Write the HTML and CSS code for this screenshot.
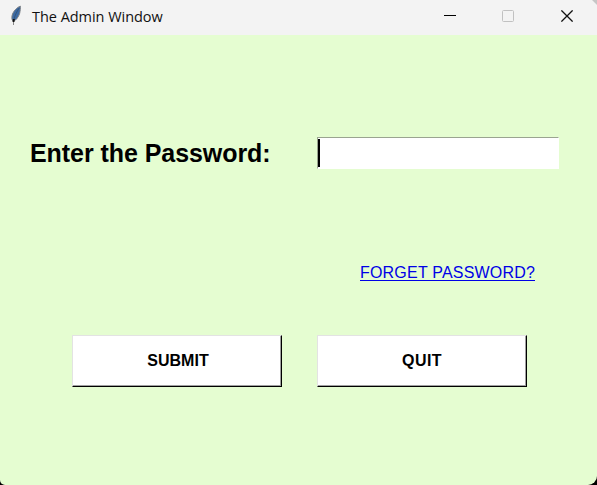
FILE: index.html
```html
<!DOCTYPE html>
<html lang="en">
<head>
<meta charset="utf-8">
<title>The Admin Window</title>
<link rel="stylesheet" href="styles.css">
</head>
<body>
<div class="window">
  <header class="titlebar">
    <svg class="feather" width="16" height="22" viewBox="0 0 16 22">
      <path d="M12.400 1.200C9 2.200 5 6.500 4.100 10.500C3.500 13 4 15.500 5.300 16.200C8 15.500 10.500 12 11.600 8.500C12.300 5.800 12.400 3 12.400 1.200Z" fill="#3b69a3" stroke="#7c8084" stroke-width="1"/>
      <path d="M11.200 3C8.500 7 6.600 11 5.800 15" fill="none" stroke="#34506f" stroke-width=".8"/>
      <path d="M5.800 14L5.500 17" stroke="#111" stroke-width="2"/>
      <path d="M5.500 17V20" stroke="#888" stroke-width="1"/>
    </svg>
    <span class="title">The Admin Window</span>
    <div class="controls">
      <svg width="12" height="12" viewBox="0 0 12 12"><path d="M0 5.500H12" stroke="#000"/></svg>
      <svg width="12" height="12" viewBox="0 0 12 12"><rect x=".5" y=".5" width="11" height="11" rx="1" fill="none" stroke="#c1c1c1"/></svg>
      <svg class="close" width="12" height="12" viewBox="0 0 12 12"><path d="M.4.4L11.600 11.600M11.600.4L.4 11.600" stroke="#111" stroke-width="1.300"/></svg>
    </div>
  </header>
  <main class="content">
    <div class="field">
      <label class="label" for="password">Enter the Password:</label>
      <div class="entry" id="password"><span class="caret"></span></div>
    </div>
    <a class="forgot">FORGET PASSWORD?</a>
    <div class="actions">
      <button class="button submit">SUBMIT</button>
      <button class="button quit">QUIT</button>
    </div>
  </main>
</div>
</body>
</html>
```

FILE: styles.css
```css
body {
  margin: 0;
  background: #000;
  font-family: "Liberation Sans", sans-serif;
}

.window {
  display: flex;
  flex-direction: column;
  height: 485px;
  overflow: hidden;
  background: #e5fdd1;
  border-radius: 0 0 9px 5px;
}

.titlebar {
  display: flex;
  box-sizing: border-box;
  height: 35px;
  padding: 0 24px 0 8px;
  background: linear-gradient(225deg, #c6c6c6 3px, #f3f3f3 4px);
}

.feather {
  margin-top: 5px;
}

.title {
  margin-left: 8px;
  font: 14.500px/33px "Open Sans", sans-serif;
  letter-spacing: -0.04px;
  color: #111;
}

.controls {
  display: flex;
  gap: 46px;
  margin: 10px 0 0 auto;
}

.close {
  margin-left: 1px;
}

.content {
  display: flex;
  flex-direction: column;
  padding-top: 102px;
}

.field {
  display: flex;
  height: 32px;
  padding-left: 30px;
}

.label {
  width: 287px;
  font-size: 25px;
  font-weight: bold;
  line-height: 32px;
  letter-spacing: -0.06px;
  color: #000;
}

.entry {
  box-sizing: border-box;
  width: 242px;
  height: 32px;
  padding-top: 1px;
  background: #fff;
  border: 1px solid;
  border-color: #9aa490 #fff #fff #9aa490;
}

.caret {
  display: block;
  width: 2px;
  height: 28px;
  background: #000;
}

.forgot {
  align-self: flex-start;
  height: 17px;
  margin: 94px 0 0 360px;
  border-bottom: 1px solid #0000e6;
  font-size: 16px;
  line-height: 19px;
  letter-spacing: 0.2px;
  color: #0000e6;
}

.actions {
  display: flex;
  gap: 35px;
  margin: 54px 0 0 72px;
}

.button {
  width: 210px;
  height: 52px;
  padding: 0;
  background: #fff;
  border: 1px solid;
  border-color: #e3e3e3 #000 #000 #e3e3e3;
  box-shadow: inset -1px -1px #a0a0a0;
  font: bold 16px/50px "Liberation Sans", sans-serif;
  color: #000;
}

.submit {
  padding-left: 2px;
}

.quit {
  letter-spacing: 0.4px;
}
```
